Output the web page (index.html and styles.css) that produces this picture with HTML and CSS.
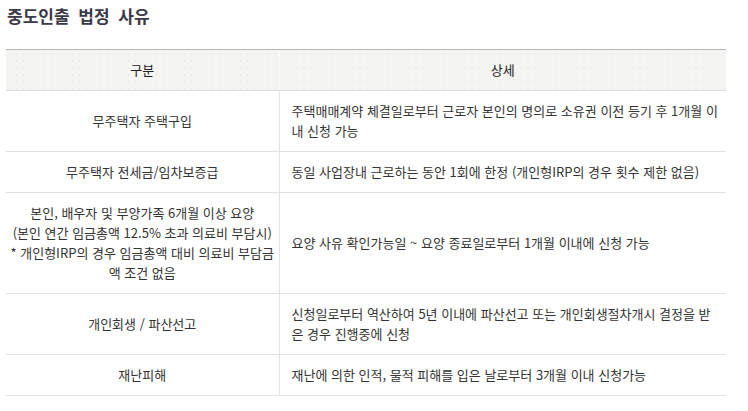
FILE: index.html
```html
<!DOCTYPE html>
<html lang="ko">
<head>
<meta charset="utf-8">
<title>중도인출 법정 사유</title>
<link rel="stylesheet" href="styles.css">
</head>
<body>
<div class="page">
  <h2 class="title">중도인출 법정 사유</h2>
  <table class="reasons">
    <colgroup>
      <col class="col-type">
      <col class="col-detail">
    </colgroup>
    <thead>
      <tr>
        <th>구분</th>
        <th>상세</th>
      </tr>
    </thead>
    <tbody>
      <tr>
        <td class="type">무주택자 주택구입</td>
        <td class="detail">주택매매계약 체결일로부터 근로자 본인의 명의로 소유권 이전 등기 후 1개월 이<br>내 신청 가능</td>
      </tr>
      <tr>
        <td class="type">무주택자 전세금/임차보증급</td>
        <td class="detail">동일 사업장내 근로하는 동안 1회에 한정 (개인형IRP의 경우 횟수 제한 없음)</td>
      </tr>
      <tr>
        <td class="type">본인, 배우자 및 부양가족 6개월 이상 요양<br>(본인 연간 임금총액 12.5% 초과 의료비 부담시)<br>* 개인형IRP의 경우 임금총액 대비 의료비 부담금<br>액 조건 없음</td>
        <td class="detail">요양 사유 확인가능일 ~ 요양 종료일로부터 1개월 이내에 신청 가능</td>
      </tr>
      <tr>
        <td class="type">개인회생 / 파산선고</td>
        <td class="detail">신청일로부터 역산하여 5년 이내에 파산선고 또는 개인회생절차개시 결정을 받<br>은 경우 진행중에 신청</td>
      </tr>
      <tr>
        <td class="type">재난피해</td>
        <td class="detail">재난에 의한 인적, 물적 피해를 입은 날로부터 3개월 이내 신청가능</td>
      </tr>
    </tbody>
  </table>
</div>
</body>
</html>
```

FILE: styles.css
```css
html, body {
  margin: 0;
  padding: 0;
  background: #fff;
}

body {
  font-family: "Noto Sans CJK KR", "Noto Sans", sans-serif;
  color: #333;
  font-size: 13px;
}

.page {
  padding: 6px 0 0 6px;
}

.title {
  margin: 0 0 23px 1px;
  font-size: 17px;
  line-height: 20px;
  font-weight: 700;
  color: #3c3a48;
  word-spacing: 4px;
}

.reasons {
  width: 720px;
  border-collapse: collapse;
  table-layout: fixed;
  line-height: 20px;
}

.col-type {
  width: 273px;
}

.reasons th {
  font-weight: 400;
  color: #222;
  padding: 10px 4px;
  text-align: center;
  background-color: #f4f4f2;
  background-image: radial-gradient(circle, #e0e0de 0.7px, transparent 1px);
  background-size: 7px 7px;
  border-top: 1px solid #b3b3b3;
  border-bottom: 1px solid #dedede;
}

.reasons th + th {
  border-left: 1px solid #fbfbfb;
}

.reasons td {
  padding: 10px 0;
  border-bottom: 1px solid #e2e2e2;
  vertical-align: middle;
  white-space: nowrap;
}

.reasons td.type {
  text-align: center;
}

.reasons td.detail {
  text-align: left;
  padding: 10px 0 10px 12px;
  border-left: 1px solid #e2e2e2;
}
```
